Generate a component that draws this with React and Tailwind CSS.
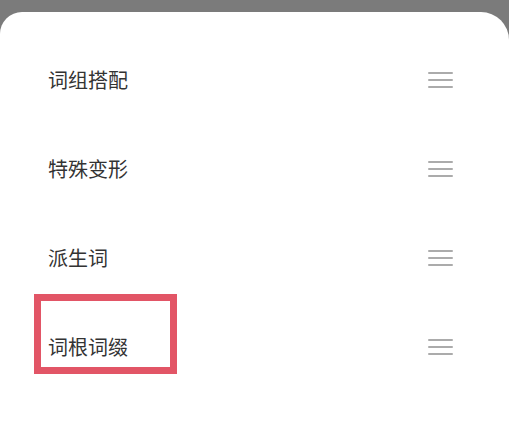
import React from "react";

const items = ["词组搭配", "特殊变形", "派生词", "词根词缀"];

function Handle() {
  return (
    <div className="flex flex-col gap-[5px] w-[25px]">
      <div className="h-[2px] bg-[#ababab] rounded-full" />
      <div className="h-[2px] bg-[#ababab] rounded-full" />
      <div className="h-[2px] bg-[#ababab] rounded-full" />
    </div>
  );
}

export default function App() {
  return (
    <div
      className="w-[509px] h-[421px] bg-[#7b7b7b] flex flex-col overflow-hidden"
      style={{ fontFamily: '"Noto Sans CJK SC", "Noto Sans", sans-serif' }}
    >
      <div className="mt-[12px] flex-1 bg-white rounded-tl-[22px] rounded-tr-[28px] pt-[23px]">
        {items.map((t, i) => (
          <div
            key={t}
            className="relative h-[89px] flex items-center justify-between pl-[48px] pr-[56px]"
          >
            <span className="text-[20px] leading-none text-[#333333]">{t}</span>
            <Handle />
            {i === 3 && (
              <div className="absolute left-[34px] top-[-8px] w-[143px] h-[80px] border-[7px] border-[#e25566]" />
            )}
          </div>
        ))}
      </div>
    </div>
  );
}
